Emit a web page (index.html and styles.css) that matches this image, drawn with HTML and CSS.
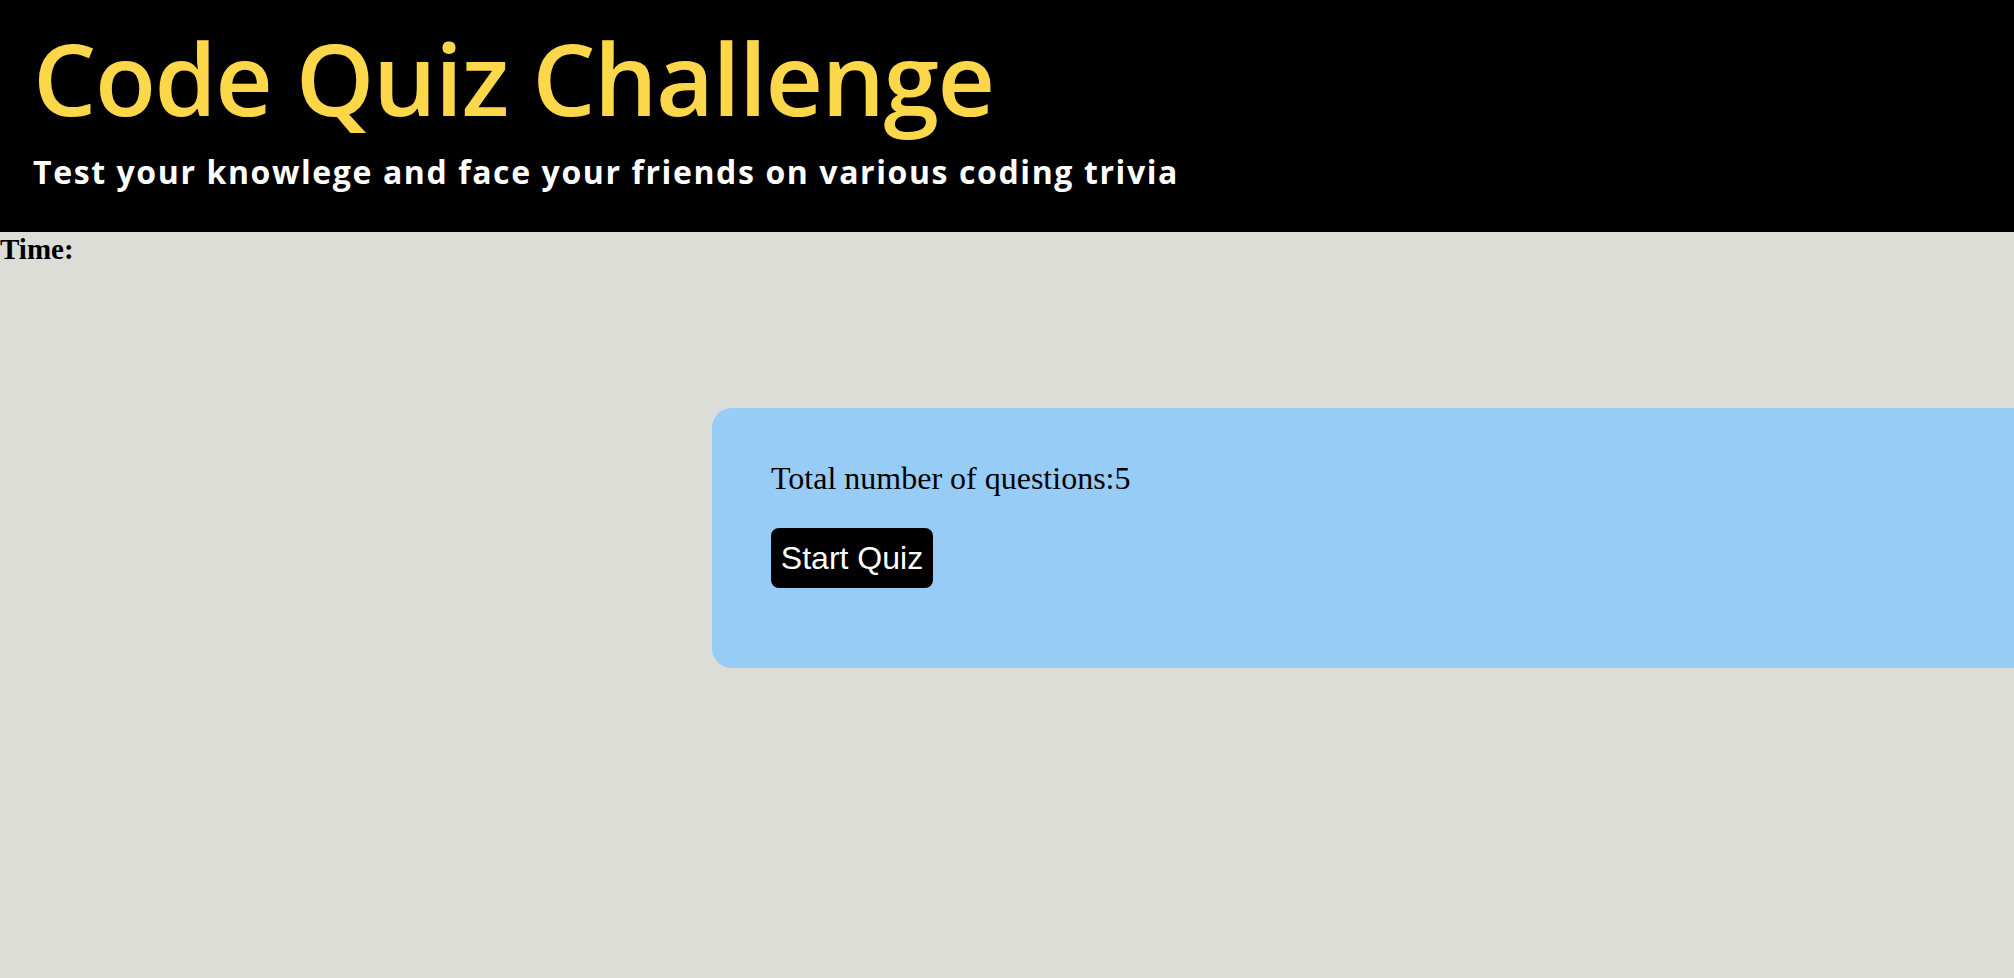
FILE: index.html
```html
<!DOCTYPE html>
<html>
<head>
<meta charset="utf-8">
<link rel="stylesheet" href="styles.css">
</head>
<body>
<header class="header">
  <h1 class="title">Code Quiz Challenge</h1>
  <p class="subtitle">Test your knowlege and face your friends on various coding trivia</p>
</header>
<div class="timer">Time:</div>
<main class="stage">
  <section class="card">
    <p class="count">Total number of questions:5</p>
    <button class="start">Start Quiz</button>
  </section>
</main>
</body>
</html>
```
FILE: styles.css
```css
html, body {
  margin: 0;
  padding: 0;
  background: #dbddd6;
  overflow: hidden;
  font-family: "Liberation Serif", "Times New Roman", serif;
}
.header {
  background: #000;
  height: 232px;
  padding: 0 0 0 33px;
  box-sizing: border-box;
  font-family: "Open Sans", "DejaVu Sans", sans-serif;
}
.title {
  margin: 0;
  padding-top: 14px;
  font-size: 100px;
  line-height: 126px;
  font-weight: 600;
  color: #fcd74a;
  letter-spacing: -1.5px;
}
.subtitle {
  margin: 0;
  padding-top: 10px;
  font-size: 32px;
  line-height: 44px;
  font-weight: 700;
  color: #fff;
  letter-spacing: 1.6px;
}
.timer {
  font-weight: 700;
  font-size: 29px;
  line-height: 34px;
  color: #000;
}
.stage {
  padding: 142px 0 0 712px;
}
.card {
  width: 1400px;
  height: 260px;
  box-sizing: border-box;
  background: #96ccf5;
  border-radius: 20px;
  padding: 50px 0 0 59px;
}
.count {
  margin: 0 0 30px 0;
  font-size: 32px;
  line-height: 40px;
}
.start {
  display: block;
  width: 162px;
  height: 60px;
  padding: 0;
  background: #000;
  color: #fff;
  border: none;
  border-radius: 8px;
  font-family: "Liberation Sans", Arial, sans-serif;
  font-size: 32px;
}
```
